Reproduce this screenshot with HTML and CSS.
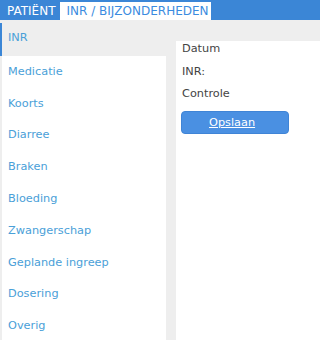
FILE: index.html
```html
<!DOCTYPE html>
<html lang="nl">
<head>
<meta charset="utf-8">
<title>INR / Bijzonderheden</title>
<link rel="stylesheet" href="styles.css">
</head>
<body>
<header class="topbar">
  <span class="tab tab-patient">PATIËNT</span>
  <span class="tab tab-active">INR / BIJZONDERHEDEN</span>
</header>
<div class="main">
  <nav class="sidebar">
    <a class="item active">INR</a>
    <a class="item">Medicatie</a>
    <a class="item">Koorts</a>
    <a class="item">Diarree</a>
    <a class="item">Braken</a>
    <a class="item">Bloeding</a>
    <a class="item">Zwangerschap</a>
    <a class="item">Geplande ingreep</a>
    <a class="item">Dosering</a>
    <a class="item">Overig</a>
  </nav>
  <section class="panel">
    <div class="row">Datum</div>
    <div class="row">INR:</div>
    <div class="row">Controle</div>
    <a class="btn">Opslaan</a>
  </section>
</div>
</body>
</html>
```

FILE: styles.css
```css
html, body {
  margin: 0;
  padding: 0;
  overflow: hidden;
}
body {
  background: #eeeeee;
  font-family: "DejaVu Sans", Verdana, sans-serif;
  height: 340px;
}
.topbar {
  display: flex;
  align-items: flex-end;
  height: 20px;
  background: #3b86d6;
}
.tab {
  font-size: 12px;
  line-height: 18px;
  height: 18px;
  white-space: nowrap;
}
.tab-patient {
  color: #ffffff;
  padding: 0 4px 0 7px;
}
.tab-active {
  background: #ffffff;
  color: #3a8be0;
  padding: 0 2px 0 7px;
}
.main {
  display: flex;
  gap: 10px;
  margin-top: 3px;
  height: 317px;
}
.sidebar {
  display: flex;
  flex-direction: column;
  width: 166px;
  flex: none;
}
.item {
  display: block;
  font-size: 11.3px;
  line-height: 16px;
  color: #4aa0d8;
  padding: 7.8px 6px 8px 6px;
  background: #ffffff;
  background-clip: padding-box;
  border-left: 2px solid transparent;
  white-space: nowrap;
}
.item.active {
  background: transparent;
  border-left-color: #3b86d6;
  padding-top: 7.2px;
  padding-bottom: 9.8px;
}
.panel {
  flex: none;
  margin-top: 18px;
  width: 200px;
  background: #ffffff;
  padding-left: 6px;
  color: #444444;
  font-size: 11.3px;
}
.row {
  line-height: 16px;
  padding-bottom: 6.5px;
  white-space: nowrap;
}
.btn {
  display: block;
  margin-top: 2.5px;
  margin-left: -1px;
  width: 52px;
  height: 21px;
  line-height: 21px;
  padding: 0 27px;
  background: #4a90e2;
  border: 1px solid #3f84d6;
  border-radius: 4px;
  color: #ffffff;
  text-decoration: underline;
  white-space: nowrap;
}
```
